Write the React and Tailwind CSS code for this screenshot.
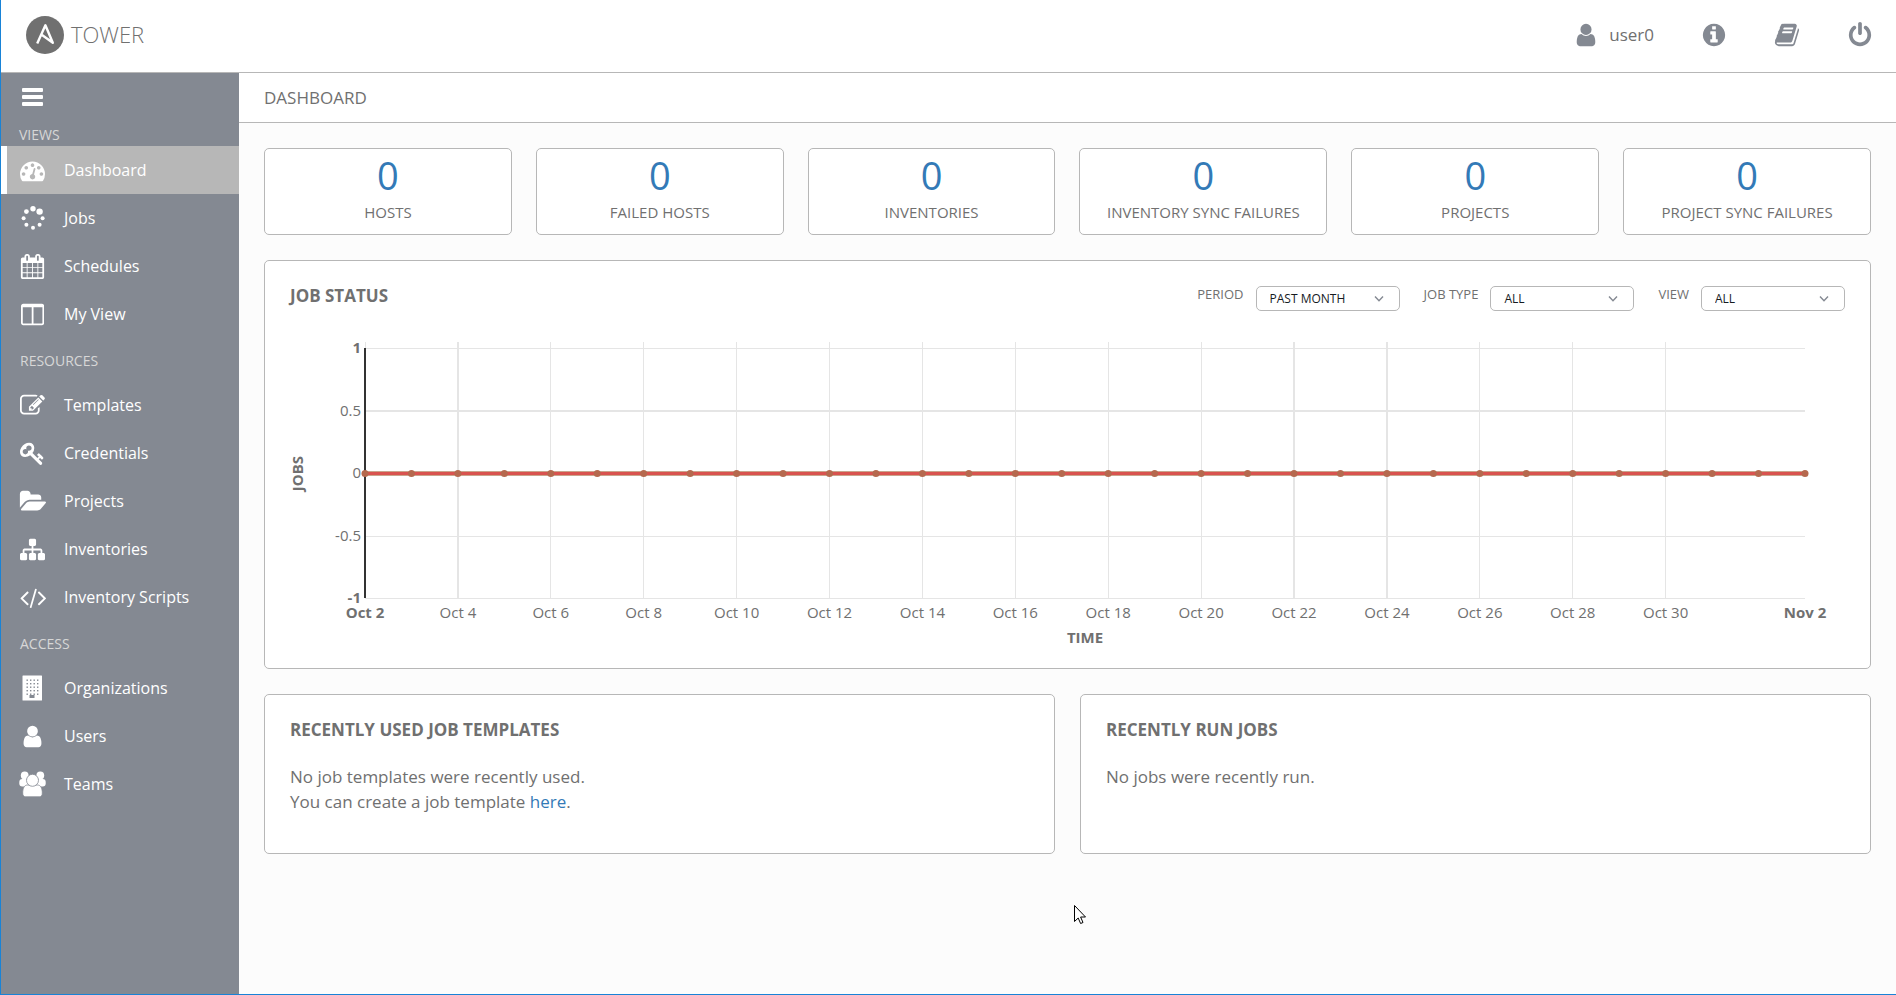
const ICONS = {
  dashboard: [1792, "M384 1152q0-53-37.5-90.5t-90.5-37.5-90.5 37.5-37.5 90.5 37.5 90.5 90.5 37.5 90.5-37.5 37.5-90.5zm192-448q0-53-37.5-90.5t-90.5-37.5-90.5 37.5-37.5 90.5 37.5 90.5 90.5 37.5 90.5-37.5 37.5-90.5zm428 481l101-382q6-26-7.5-48.5t-38.5-29.5-48 6.5-30 39.5l-101 382q-60 5-107 43.5t-63 98.5q-20 77 20 146t117 89 146-20 89-117q16-60-6-117t-72-91zm660-33q0-53-37.5-90.5t-90.5-37.5-90.5 37.5-37.5 90.5 37.5 90.5 90.5 37.5 90.5-37.5 37.5-90.5zm-640-640q0-53-37.5-90.5t-90.5-37.5-90.5 37.5-37.5 90.5 37.5 90.5 90.5 37.5 90.5-37.5 37.5-90.5zm448 192q0-53-37.5-90.5t-90.5-37.5-90.5 37.5-37.5 90.5 37.5 90.5 90.5 37.5 90.5-37.5 37.5-90.5zm320 448q0 261-141 483-19 29-54 29h-1402q-35 0-54-29-141-221-141-483 0-182 71-348t191-286 286-191 348-71 348 71 286 191 191 286 71 348z"],
  calendar: [1792, "M192 1664h288v-288h-288v288zm352 0h320v-288h-320v288zm-352-352h288v-320h-288v320zm352 0h320v-320h-320v320zm-352-384h288v-288h-288v288zm736 736h320v-288h-320v288zm-384-736h320v-288h-320v288zm768 736h288v-288h-288v288zm-384-352h320v-320h-320v320zm-352-864v-288q0-13-9.5-22.5t-22.5-9.5h-64q-13 0-22.5 9.5t-9.5 22.5v288q0 13 9.5 22.5t22.5 9.5h64q13 0 22.5-9.5t9.5-22.5zm736 864h288v-320h-288v320zm-384-384h320v-288h-320v288zm384 0h288v-288h-288v288zm32-480v-288q0-13-9.5-22.5t-22.5-9.5h-64q-13 0-22.5 9.5t-9.5 22.5v288q0 13 9.5 22.5t22.5 9.5h64q13 0 22.5-9.5t9.5-22.5zm384-64v1280q0 52-38 90t-90 38h-1408q-52 0-90-38t-38-90v-1280q0-52 38-90t90-38h128v-96q0-66 47-113t113-47h64q66 0 113 47t47 113v96h384v-96q0-66 47-113t113-47h64q66 0 113 47t47 113v96h128q52 0 90 38t38 90z"],
  columns: [1664, "M160 1536h608v-1152h-640v1120q0 13 9.5 22.5t22.5 9.5zm1376-32v-1120h-640v1152h608q13 0 22.5-9.5t9.5-22.5zm128-1216v1216q0 66-47 113t-113 47h-1344q-66 0-113-47t-47-113v-1216q0-66 47-113t113-47h1344q66 0 113 47t47 113z"],
  edit: [1792, "M888 1184l116-116-152-152-116 116v56h96v96h56zm440-720q-16-16-33 1l-350 350q-17 17-1 33t33-1l350-350q17-17 1-33zm80 594v190q0 119-84.5 203.5t-203.5 84.5h-832q-119 0-203.5-84.5t-84.5-203.5v-832q0-119 84.5-203.5t203.5-84.5h832q63 0 117 25 15 7 18 23 3 17-9 29l-49 49q-14 14-32 8-23-6-45-6h-832q-66 0-113 47t-47 113v832q0 66 47 113t113 47h832q66 0 113-47t47-113v-126q0-13 9-22l64-64q15-15 35-7t20 29zm-96-738l288 288-672 672h-288v-288zm444 132l-92 92-288-288 92-92q28-28 68-28t68 28l152 152q28 28 28 68t-28 68z"],
  key: [1792, "M832 512q0-80-56-136t-136-56-136 56-56 136q0 42 19 83-41-19-83-19-80 0-136 56t-56 136 56 136 136 56 136-56 56-136q0-42-19-83 41 19 83 19 80 0 136-56t56-136zm851 704q0 17-49 66t-66 49q-9 0-28.5-16t-36.5-33-38.5-40-24.5-26l-96 96 220 220q28 28 28 68 0 42-39 81t-81 39q-40 0-68-28l-671-671q-176 131-365 131-163 0-265.5-102.5t-102.5-265.5q0-160 95-313t248-248 313-95q163 0 265.5 102.5t102.5 265.5q0 189-131 365l355 355 96-96q-3-3-26-24.5t-40-38.5-33-36.5-16-28.5q0-17 49-66t66-49q13 0 23 10 6 6 46 44.5t82 79.5 86.5 86 73 78 28.5 41z"],
  folder: [1943, "M1943 952q0 31-31 66l-336 396q-43 51-120.5 86.5t-143.5 35.5h-1088q-34 0-60.5-13t-26.5-43q0-31 31-66l336-396q43-51 120.5-86.5t143.5-35.5h1088q34 0 60.5 13t26.5 43zm-343-344v160h-832q-94 0-197 47.5t-164 119.5l-337 396-5 6q0-4-.5-12.5t-.5-12.5v-960q0-92 66-158t158-66h320q92 0 158 66t66 158v32h544q92 0 158 66t66 158z"],
  sitemap: [1792, "M1792 1248v320q0 40-28 68t-68 28h-320q-40 0-68-28t-28-68v-320q0-40 28-68t68-28h96v-192h-512v192h96q40 0 68 28t28 68v320q0 40-28 68t-68 28h-320q-40 0-68-28t-28-68v-320q0-40 28-68t68-28h96v-192h-512v192h96q40 0 68 28t28 68v320q0 40-28 68t-68 28h-320q-40 0-68-28t-28-68v-320q0-40 28-68t68-28h96v-192q0-52 38-90t90-38h512v-192h-96q-40 0-68-28t-28-68v-320q0-40 28-68t68-28h320q40 0 68 28t28 68v320q0 40-28 68t-68 28h-96v192h512q52 0 90 38t38 90v192h96q40 0 68 28t28 68z"],
  code: [1939, "M681 1399l-50 50q-10 10-23 10t-23-10l-466-466q-10-10-10-23t10-23l466-466q10-10 23-10t23 10l50 50q10 10 10 23t-10 23l-393 393 393 393q10 10 10 23t-10 23zm591-1067l-373 1291q-4 13-15.5 19.5t-23.5 2.5l-62-17q-13-4-19.5-15.5t-2.5-24.5l373-1291q4-13 15.5-19.5t23.5-2.5l62 17q13 4 19.5 15.5t2.5 24.5zm657 651l-466 466q-10 10-23 10t-23-10l-50-50q-10-10-10-23t10-23l393-393-393-393q-10-10-10-23t10-23l50-50q10-10 23-10t23 10l466 466q10 10 10 23t-10 23z"],
  user: [1792, "M1536 1399q0 109-62.5 187t-150.5 78h-854q-88 0-150.5-78t-62.5-187q0-85 8.5-160.5t31.5-152 58.5-131 94-89 134.5-34.5q131 128 313 128t313-128q76 0 134.5 34.5t94 89 58.5 131 31.5 152 8.5 160.5zm-256-887q0 159-112.5 271.5t-271.5 112.5-271.5-112.5-112.5-271.5 112.5-271.5 271.5-112.5 271.5 112.5 112.5 271.5z"],
  info: [1792, "M1152 1376v-160q0-14-9-23t-23-9h-96v-512q0-14-9-23t-23-9h-320q-14 0-23 9t-9 23v160q0 14 9 23t23 9h96v320h-96q-14 0-23 9t-9 23v160q0 14 9 23t23 9h448q14 0 23-9t9-23zm-128-896v-160q0-14-9-23t-23-9h-192q-14 0-23 9t-9 23v160q0 14 9 23t23 9h192q14 0 23-9t9-23zm640 416q0 209-103 385.5t-279.5 279.5-385.5 103-385.5-103-279.5-279.5-103-385.5 103-385.5 279.5-279.5 385.5-103 385.5 103 279.5 279.5 103 385.5z"],
  book: [1792, "M1703 478q40 57 18 129l-275 906q-19 64-76.5 107.5t-122.5 43.5h-923q-77 0-148.5-53.5t-99.5-131.5q-24-67-2-127 0-4 3-27t4-37q1-8-3-21.5t-3-19.5q2-11 8-21t16.5-23.5 16.5-23.5q23-38 45-91.5t30-91.5q3-10 .5-30t-.5-28q3-11 17-28t17-23q21-36 42-92t25-90q1-9-2.5-32t.5-28q4-13 22-30.5t22-22.5q19-26 42.5-84.5t27.5-96.5q1-8-3-25.5t-2-26.5q2-8 9-18t18-23 17-21q8-12 16.5-30.5t15-35 16-36 19.5-32 26.5-23.5 36-11.5 47.5 5.5l-1 3q38-9 51-9h761q74 0 114 56t18 130l-274 906q-36 119-71.5 153.5t-128.5 34.5h-869q-27 0-38 15-11 16-1 43 24 70 144 70h923q29 0 56-15.5t35-41.5l300-987q7-22 5-57 38 15 59 43zm-1064 2q-4 13 2 22.5t20 9.5h608q13 0 25.5-9.5t16.5-22.5l21-64q4-13-2-22.5t-20-9.5h-608q-13 0-25.5 9.5t-16.5 22.5zm-83 256q-4 13 2 22.5t20 9.5h608q13 0 25.5-9.5t16.5-22.5l21-64q4-13-2-22.5t-20-9.5h-608q-13 0-25.5 9.5t-16.5 22.5z"],
  power: [1792, "M1664 896q0 156-61 298t-164 245-245 164-298 61-298-61-245-164-164-245-61-298q0-182 80.5-343t226.5-270q43-32 95.5-25t83.5 50q32 42 24.5 94.5t-49.5 84.5q-98 74-151.5 181t-53.5 228q0 104 40.5 198.5t109.5 163.5 163.5 109.5 198.5 40.5 198.5-40.5 163.5-109.5 109.5-163.5 40.5-198.5q0-121-53.5-228t-151.5-181q-42-32-49.5-84.5t24.5-94.5q31-43 84-50t95 25q146 109 226.5 270t80.5 343zm-640-768v640q0 52-38 90t-90 38-90-38-38-90v-640q0-52 38-90t90-38 90 38 38 90z"],
};

function Icon({ name, className }) {
  const [width, d] = ICONS[name];
  return (
    <svg viewBox={`0 0 ${width} 1792`} fill="currentColor" className={className} aria-hidden="true">
      <path d={d} />
    </svg>
  );
}

function JobsIcon() {
  return (
    <svg viewBox="0 0 26 26" fill="currentColor" className="h-[26px] w-[26px]" aria-hidden="true">
      <circle cx="13" cy="3.8" r="2.7" />
      <circle cx="19.6" cy="6.6" r="3.2" />
      <circle cx="22.6" cy="13.2" r="2" />
      <circle cx="19.6" cy="19.8" r="2" />
      <circle cx="13" cy="22.7" r="2" />
      <circle cx="6.4" cy="19.8" r="2" />
      <circle cx="3.6" cy="13.2" r="2" />
      <circle cx="6.4" cy="6.6" r="2.4" />
    </svg>
  );
}

function BuildingIcon() {
  return (
    <svg viewBox="0 0 26 26" className="h-[26px] w-[26px]" aria-hidden="true">
      <rect x="2.5" y="0.5" width="19.5" height="25" rx="0.5" fill="currentColor" />
      <g fill="#848992">
        {[4.5, 8, 11.5, 15, 18.5].map((y) =>
          [6.5, 10, 13.5, 17].map((x) => <rect key={`${x}-${y}`} x={x} y={y} width="1.4" height="1.4" />)
        )}
        <rect x="9.5" y="20" width="5" height="3" />
      </g>
    </svg>
  );
}

function TeamsIcon() {
  return (
    <svg viewBox="0 0 27 26" fill="currentColor" className="h-[26px] w-[27px]" aria-hidden="true">
      <circle cx="5.7" cy="4.5" r="3.9" />
      <circle cx="21.3" cy="4.5" r="3.9" />
      <rect x="0.3" y="8" width="9" height="7.5" rx="3" />
      <rect x="17.7" y="8" width="9" height="7.5" rx="3" />
      <g stroke="#848992" strokeWidth="0.8">
        <path d="M3.7 22c0-4.500 1.500-8 4.800-8h10c3.300 0 4.800 3.500 4.800 8 0 2.500-1 3.800-3 3.800h-13.600c-2 0-3-1.300-3-3.800z" />
        <circle cx="13.500" cy="9.300" r="6" />
      </g>
    </svg>
  );
}

const icon = (name) => <Icon name={name} className="h-[25px] w-auto" />;

const SECTIONS = [
  {
    title: "VIEWS",
    items: [
      ["Dashboard", icon("dashboard"), true],
      ["Jobs", <JobsIcon />],
      ["Schedules", icon("calendar")],
      ["My View", icon("columns")],
    ],
  },
  {
    title: "RESOURCES",
    items: [
      ["Templates", icon("edit")],
      ["Credentials", icon("key")],
      ["Projects", icon("folder")],
      ["Inventories", icon("sitemap")],
      ["Inventory Scripts", icon("code")],
    ],
  },
  {
    title: "ACCESS",
    items: [
      ["Organizations", <BuildingIcon />],
      ["Users", icon("user")],
      ["Teams", <TeamsIcon />],
    ],
  },
];

function Logo() {
  return (
    <a href="#home" className="flex items-center gap-[7px] text-[#707070]">
      <svg viewBox="0 0 38 38" className="h-[38px] w-[38px]" aria-hidden="true">
        <circle cx="19" cy="19" r="19" fill="#707070" />
        <path d="M11.200 27.500L19.400 9.300L26.800 26.800L15 18.200" fill="none" stroke="#fff" strokeWidth="2.400" strokeLinejoin="round" />
      </svg>
      <span className="pb-0.5 text-[22px] font-light leading-[30px]">TOWER</span>
    </a>
  );
}

function Header() {
  return (
    <header className="flex h-[73px] items-center justify-between border-b border-[#b7b7b7] bg-white pb-0.5 pl-[25px] pr-[23px]">
      <Logo />
      <div className="flex items-center gap-[47px] text-[#848992]">
        <a href="#user" className="flex items-center gap-[10px]">
          <Icon name="user" className="h-[26px] w-[26px]" />
          <span className="pb-px text-[17px] text-[#707070]">user0</span>
        </a>
        <button type="button" aria-label="About"><Icon name="info" className="h-[26px] w-[26px]" /></button>
        <button type="button" aria-label="Documentation"><Icon name="book" className="h-[26px] w-[26px]" /></button>
        <button type="button" aria-label="Log out"><Icon name="power" className="h-[26px] w-[26px]" /></button>
      </div>
    </header>
  );
}

function Sidebar() {
  return (
    <nav className="flex w-[238px] shrink-0 flex-col bg-[#848992] text-white">
      <button type="button" aria-label="Toggle menu" className="flex h-12 items-center pl-[21px]">
        <svg viewBox="0 0 21 18" fill="currentColor" className="h-[18px] w-[21px]" aria-hidden="true">
          <rect width="21" height="4" rx="1" />
          <rect y="7" width="21" height="4" rx="1" />
          <rect y="14" width="21" height="4" rx="1" />
        </svg>
      </button>
      {SECTIONS.map((section, i) => (
        <div key={section.title} className={i ? "pt-[13px]" : "pt-1"}>
          <h2 className={i ? "mb-[10px] pl-[19px] text-sm leading-5 text-[#d7d7d7]" : "mb-px pl-[18px] text-sm leading-5 text-[#d7d7d7]"}>
            {section.title}
          </h2>
          <ul>
            {section.items.map(([label, glyph, active]) => (
              <li key={label}>
                <a
                  href={`#${label.toLowerCase().replace(" ", "-")}`}
                  className={
                    active
                      ? "flex h-12 items-center border-l-[6px] border-white bg-[#b7b7b7]"
                      : "flex h-12 items-center border-l-[6px] border-transparent"
                  }
                >
                  <span className="ml-3 flex w-[27px] justify-center">{glyph}</span>
                  <span className="pl-[18px] text-base">{label}</span>
                </a>
              </li>
            ))}
          </ul>
        </div>
      ))}
    </nav>
  );
}

const COUNTS = ["HOSTS", "FAILED HOSTS", "INVENTORIES", "INVENTORY SYNC FAILURES", "PROJECTS", "PROJECT SYNC FAILURES"];

function Select({ id, label, options }) {
  return (
    <div className="flex items-start gap-3">
      <label htmlFor={id} className="text-[13px] leading-4 text-[#707070]">{label}</label>
      <div className="relative">
        <select
          id={id}
          className="block h-[25px] w-36 appearance-none rounded-[5px] border border-[#b7b7b7] bg-white pl-[13px] text-xs leading-[23px] text-[#161b1f]"
        >
          {options.map((o) => <option key={o}>{o}</option>)}
        </select>
        <svg viewBox="0 0 10 6" className="pointer-events-none absolute right-4 top-[10px] h-[6px] w-[10px]" aria-hidden="true">
          <path d="M1 0.500L5 4.800L9 0.500" fill="none" stroke="#848992" strokeWidth="1.400" />
        </svg>
      </div>
    </div>
  );
}

const DAYS = Array.from({ length: 32 }, (_, i) => i);
const X_TICKS = DAYS.filter((d) => d % 2 === 0 && d < 30);
const HEAVY_TICKS = [2, 20, 22];
const at = (d) => `${(d / 31) * 100}%`;

function Chart() {
  return (
    <svg className="block h-[310px] w-full overflow-visible" role="img" aria-label="Jobs over time">
      <g stroke="#e5e5e5" shapeRendering="crispEdges">
        {X_TICKS.map((d) => (
          <line key={d} x1={at(d)} x2={at(d)} y1="0" y2="256" strokeWidth={HEAVY_TICKS.includes(d) ? 2 : 1} />
        ))}
        {[6.5, 131.5, 194, 256.5].map((y) => <line key={y} x1="0" x2="100%" y1={y} y2={y} />)}
        <line x1="0" x2="100%" y1="69" y2="69" strokeWidth="2" />
      </g>
      <line x1="0" x2="0" y1="6" y2="256" stroke="#333" strokeWidth="2" />
      <line x1="0" x2="100%" y1="131.500" y2="131.500" stroke="#c9a58c" strokeWidth="5" />
      <line x1="0" x2="100%" y1="131.500" y2="131.500" stroke="#d9534f" strokeWidth="3" />
      <g fill="#b5694e">
        {DAYS.map((d) => <circle key={d} cx={at(d)} cy="131.500" r="3.500" />)}
      </g>
      <g className="text-[15px]" fill="#707070" textAnchor="end">
        <text x="-4" y="11" className="font-bold">1</text>
        <text x="-4" y="74">0.5</text>
        <text x="-4" y="136">0</text>
        <text x="-4" y="199">-0.5</text>
        <text x="-4" y="261" className="font-bold">-1</text>
      </g>
      <g className="text-[15px]" fill="#707070" textAnchor="middle">
        {X_TICKS.map((d) => (
          <text key={d} x={at(d)} y="276" className={d ? "" : "font-bold"}>{`Oct ${d + 2}`}</text>
        ))}
        <text x="100%" y="276" className="font-bold">Nov 2</text>
        <text x="50%" y="301" className="font-bold">TIME</text>
        <text transform="translate(-62 131.500) rotate(-90)" className="font-bold">JOBS</text>
      </g>
    </svg>
  );
}

const PANEL = "rounded-[5px] border border-[#b7b7b7] bg-white";

export default function App() {
  return (
    <div className="flex min-h-screen flex-col border-b border-l border-[#1883d7] bg-[#fcfcfc] font-['Open_Sans',sans-serif] text-[#707070]">
      <Header />
      <div className="flex flex-1">
        <Sidebar />
        <main className="min-w-0 flex-1">
          <h1 className="flex h-[50px] items-center border-b border-[#b7b7b7] bg-white pl-[25px] text-[17px]">DASHBOARD</h1>
          <div className="flex flex-col gap-[25px] p-[25px]">
            <ul className="grid grid-cols-6 gap-6">
              {COUNTS.map((label) => (
                <li key={label}>
                  <a href="#list" className={`${PANEL} flex h-[87px] flex-col items-center pt-[3px]`}>
                    <span className="text-[38px] leading-[46px] text-[#337ab7]">0</span>
                    <span className="pt-1 text-[15px] leading-5">{label}</span>
                  </a>
                </li>
              ))}
            </ul>
            <section className={`${PANEL} h-[409px] px-[25px] pt-[25px]`}>
              <div className="flex justify-between">
                <h2 className="text-[17px] font-bold leading-[20px]">JOB STATUS</h2>
                <form className="flex gap-6">
                  <Select id="period" label="PERIOD" options={["PAST MONTH", "PAST TWO WEEKS", "PAST WEEK", "PAST 24 HOURS"]} />
                  <Select id="job-type" label="JOB TYPE" options={["ALL", "INVENTORY SYNC", "SCM UPDATE", "PLAYBOOK RUN"]} />
                  <Select id="view" label="VIEW" options={["ALL", "SUCCESSFUL", "FAILED"]} />
                </form>
              </div>
              <div className="pl-[75px] pr-10 pt-[31px]">
                <Chart />
              </div>
            </section>
            <div className="grid grid-cols-2 gap-[25px]">
              <section className={`${PANEL} h-40 p-[25px]`}>
                <h2 className="text-[17px] font-bold leading-[20px]">RECENTLY USED JOB TEMPLATES</h2>
                <p className="pt-6 text-[17px] leading-[25px]">
                  No job templates were recently used.
                  <br />
                  You can create a job template <a href="#new" className="text-[#337ab7]">here</a>.
                </p>
              </section>
              <section className={`${PANEL} h-40 p-[25px]`}>
                <h2 className="text-[17px] font-bold leading-[20px]">RECENTLY RUN JOBS</h2>
                <p className="pt-6 text-[17px] leading-[25px]">No jobs were recently run.</p>
              </section>
            </div>
          </div>
        </main>
      </div>
      <svg viewBox="0 0 12 20" className="pointer-events-none absolute left-[1074px] top-[905px] h-5 w-3" aria-hidden="true">
        <path d="M0.500 0.500V16.500L4.200 13L6.600 18.500L9 17.500L6.600 12H11.500Z" fill="#fff" stroke="#000" />
      </svg>
    </div>
  );
}
